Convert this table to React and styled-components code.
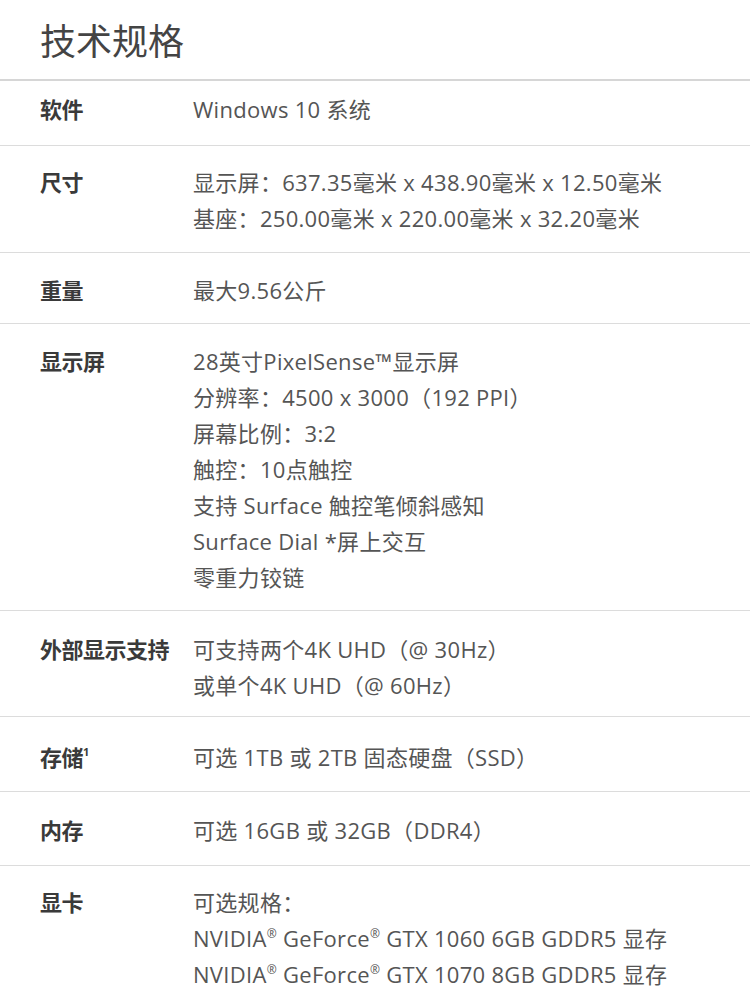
import React from "react";
import styled, { createGlobalStyle } from "styled-components";

const GlobalStyle = createGlobalStyle`
  body {
    margin: 0;
    background: #fff;
    font-family: "Open Sans", "Noto Sans CJK SC", sans-serif;
  }
`;

const Page = styled.div`
  width: 750px;
  background: #fff;
`;

const Title = styled.h1`
  margin: 0;
  padding: 18px 40px 0;
  height: 61px;
  font-size: 36px;
  font-weight: 400;
  line-height: 48px;
  color: #444;
  border-bottom: 2px solid #d6d6d6;
`;

const Row = styled.div`
  display: grid;
  grid-template-columns: 153px 1fr;
  padding: ${props => props.pad || "19px 0 15px"};
  padding-left: 40px;
  border-bottom: 1px solid #dcdcdc;
`;

const Label = styled.div`
  font-size: 22px;
  font-weight: 700;
  line-height: 36px;
  color: #3a3a3a;
  white-space: nowrap;
  letter-spacing: -0.5px;
  sup {
    font-size: 11px;
    vertical-align: top;
    line-height: 26px;
  }
`;

const Values = styled.div`
  font-size: 22px;
  line-height: 36px;
  color: #555;
  white-space: nowrap;
  letter-spacing: 0.3px;
  sup {
    font-size: 12px;
    vertical-align: top;
    line-height: 28px;
  }
`;

const specs = [
  { label: "软件", lines: ["Windows 10 系统"], pad: "10px 0 18px" },
  {
    label: "尺寸",
    lines: [
      "显示屏：637.35毫米 x 438.90毫米 x 12.50毫米",
      "基座：250.00毫米 x 220.00毫米 x 32.20毫米"
    ],
    pad: "18px 0 16px"
  },
  { label: "重量", lines: ["最大9.56公斤"] },
  {
    label: "显示屏",
    lines: [
      "28英寸PixelSense™显示屏",
      "分辨率：4500 x 3000（192 PPI）",
      "屏幕比例：3:2",
      "触控：10点触控",
      "支持 Surface 触控笔倾斜感知",
      "Surface Dial *屏上交互",
      "零重力铰链"
    ]
  },
  {
    label: "外部显示支持",
    lines: ["可支持两个4K UHD（@ 30Hz）", "或单个4K UHD（@ 60Hz）"],
    pad: "20px 0 13px"
  },
  {
    label: (
      <>
        存储<sup>1</sup>
      </>
    ),
    lines: ["可选 1TB 或 2TB 固态硬盘（SSD）"],
    pad: "22px 0 16px"
  },
  { label: "内存", lines: ["可选 16GB 或 32GB（DDR4）"], pad: "20px 0 17px" },
  {
    label: "显卡",
    lines: [
      "可选规格：",
      <>
        NVIDIA<sup>®</sup> GeForce<sup>®</sup> GTX 1060 6GB GDDR5 显存
      </>,
      <>
        NVIDIA<sup>®</sup> GeForce<sup>®</sup> GTX 1070 8GB GDDR5 显存
      </>
    ],
    pad: "18px 0 15px"
  }
];

export default function App() {
  return (
    <Page>
      <GlobalStyle />
      <Title>技术规格</Title>
      {specs.map((spec, i) => (
        <Row key={i} pad={spec.pad}>
          <Label>{spec.label}</Label>
          <Values>
            {spec.lines.map((line, j) => (
              <div key={j}>{line}</div>
            ))}
          </Values>
        </Row>
      ))}
    </Page>
  );
}
